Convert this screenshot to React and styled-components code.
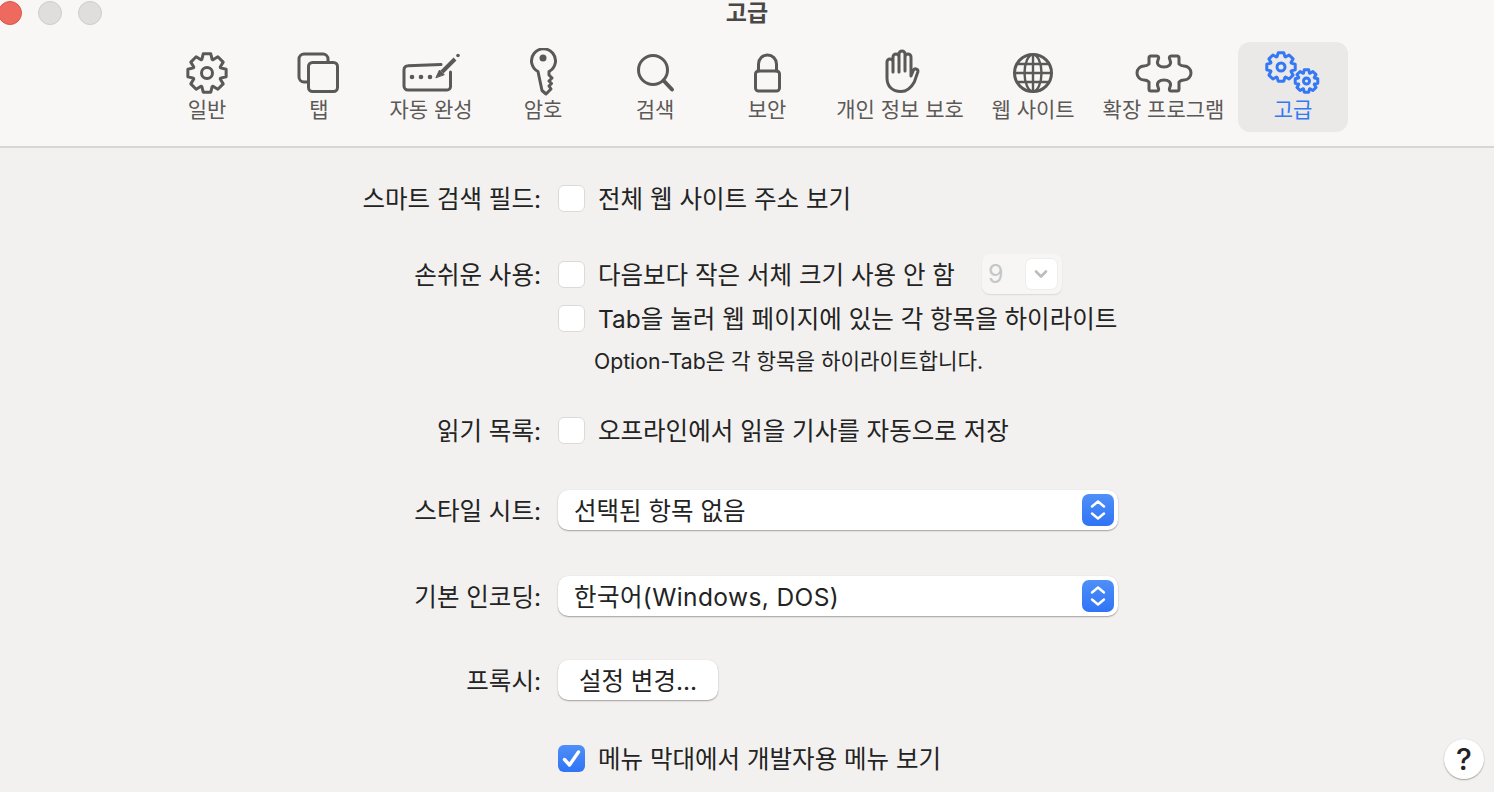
import React from "react";
import styled, { createGlobalStyle } from "styled-components";

const colors = {
    bar: "#f9f7f5",
    body: "#f2f1ef",
    icon: "#5b5957",
    blue: "#3478f6",
    text: "#232323",
};

const Global = createGlobalStyle`
    html, body {
        margin: 0;
        height: 100%;
        overflow: hidden;
        background: ${colors.body};
    }
    body {
        font-family: Inter, "Noto Sans CJK KR", sans-serif;
        color: ${colors.text};
    }
`;

const Window = styled.div`
    width: 1494px;
    height: 792px;
    position: relative;
    overflow: hidden;
`;

const Header = styled.header`
    height: 146px;
    background: ${colors.bar};
    border-bottom: 2px solid #d8d6d4;
    box-sizing: content-box;
    margin-bottom: -1px;
`;

const TitleBar = styled.div`
    display: grid;
    grid-template-columns: 1fr auto 1fr;
    height: 26px;
    align-items: center;
`;

const Lights = styled.div`
    display: flex;
    gap: 16px;
    margin-left: -2px;
`;

const Light = styled.span`
    width: 24px;
    height: 24px;
    border-radius: 50%;
    box-sizing: border-box;
    background: ${(p) => (p.$red ? "#ee6a5f" : "#dfdedc")};
    border: 1px solid ${(p) => (p.$red ? "#d9554b" : "#cfcdcb")};
`;

const Title = styled.h1`
    margin: 0;
    font-size: 23px;
    font-weight: 700;
    line-height: 24px;
    color: #4a4846;
`;

const Toolbar = styled.nav`
    display: flex;
    padding: 16px 0 0 151px;
`;

const Tool = styled.div`
    width: ${(p) => p.$width}px;
    height: 90px;
    border-radius: 12px;
    display: flex;
    flex-direction: column;
    align-items: center;
    background: ${(p) => (p.$active ? "#eae9e7" : "transparent")};
    color: ${(p) => (p.$active ? colors.blue : colors.icon)};
    svg {
        margin-top: 6px;
        display: block;
    }
`;

const ToolLabel = styled.span`
    font-size: 21px;
    line-height: 26px;
    margin-top: -3px;
    white-space: nowrap;
`;

const Form = styled.main`
    padding-top: 31px;
`;

const Row = styled.div`
    display: grid;
    grid-template-columns: 541px 1fr;
    column-gap: 17px;
    height: 40px;
    align-items: center;
    margin-top: ${(p) => p.$top || 0}px;
`;

const Label = styled.span`
    font-size: 24.5px;
    padding-bottom: 2px;
    text-align: right;
    white-space: nowrap;
`;

const Control = styled.div`
    grid-column: 2;
    display: flex;
    align-items: center;
`;

const Box = styled.span`
    width: 27px;
    height: 27px;
    box-sizing: border-box;
    border-radius: 6px;
    flex: none;
    display: flex;
    align-items: center;
    justify-content: center;
    background: ${(p) => (p.$checked ? "linear-gradient(#4f8ff8, #2f74f6)" : "#fff")};
    border: ${(p) => (p.$checked ? "none" : "1px solid #dcdad8")};
`;

const CheckText = styled.span`
    font-size: 24.5px;
    padding-bottom: 2px;
    margin-left: 13px;
    white-space: nowrap;
`;

const Hint = styled.span`
    font-size: 21.2px;
    padding-bottom: 2px;
    margin-left: 36px;
    white-space: nowrap;
`;

const FontSize = styled.div`
    width: 80px;
    height: 40px;
    box-sizing: border-box;
    margin-left: 27px;
    padding: 4px;
    border-radius: 8px;
    background: #f7f6f5;
    box-shadow: 0 1px 1.5px rgba(0, 0, 0, 0.1);
    display: flex;
    align-items: center;
    justify-content: space-between;
    color: #c6c6c6;
    font-size: 25px;
    padding-left: 6px;
`;

const FontArrow = styled.span`
    width: 33px;
    height: 32px;
    border-radius: 7px;
    background: #fff;
    border: 1px solid #eeedec;
    box-sizing: border-box;
    display: flex;
    align-items: center;
    justify-content: center;
`;

const raised = `
    background: #fff;
    border-radius: 10px;
    box-shadow: 0 1px 1.5px rgba(0, 0, 0, 0.32), 0 0 1px rgba(0, 0, 0, 0.12);
`;

const Select = styled.div`
    ${raised}
    width: 560px;
    height: 40px;
    box-sizing: border-box;
    padding: 0 4px 0 16px;
    display: flex;
    align-items: center;
    justify-content: space-between;
`;

const SelectText = styled.span`
    font-size: 24.5px;
    padding-bottom: 2px;
    letter-spacing: ${(p) => p.$track || 0}px;
`;

const Stepper = styled.span`
    width: 32px;
    height: 32px;
    border-radius: 7px;
    background: linear-gradient(#4f8ff8, #2f74f6);
    display: flex;
    align-items: center;
    justify-content: center;
`;

const Button = styled.div`
    ${raised}
    width: 160px;
    height: 40px;
    box-sizing: border-box;
    padding-bottom: 2px;
    display: flex;
    align-items: center;
    justify-content: center;
    font-size: 24.5px;
`;

const Help = styled.div`
    position: absolute;
    left: 1444px;
    top: 739px;
    width: 40px;
    height: 40px;
    ${raised}
    border-radius: 50%;
    display: flex;
    align-items: center;
    justify-content: center;
    font-size: 30px;
    font-weight: 500;
`;

// cog outline, computed so the big and small ones share a shape
const gearPath = (cx, cy, outer, inner, teeth = 8) => {
    const step = (Math.PI * 2) / teeth;
    const pts = [];
    for (let i = 0; i < teeth; i++) {
        const a = i * step - Math.PI / 2;
        [
            [inner, -0.5],
            [outer, -0.27],
            [outer, 0.27],
            [inner, 0.5],
        ].forEach(([r, k]) => {
            const t = a + k * step * 0.92;
            pts.push(`${(cx + r * Math.cos(t)).toFixed(2)} ${(cy + r * Math.sin(t)).toFixed(2)}`);
        });
    }
    return `M${pts.join("L")}Z`;
};

const Icon = ({ cx, children }) => (
    <svg
        width="70"
        height="52"
        viewBox={`${cx - 35} 48 70 52`}
        fill="none"
        stroke="currentColor"
        strokeWidth="3"
        strokeLinecap="round"
        strokeLinejoin="round"
    >
        {children}
    </svg>
);

const icons = {
    general: (
        <Icon cx={207}>
            <path d={gearPath(207, 73, 19.5, 14.5)} />
            <circle cx="207" cy="73" r="5.5" />
        </Icon>
    ),
    tabs: (
        <Icon cx={319}>
            <path d="M308 82h-4a5 5 0 0 1-5-5V59a5 5 0 0 1 5-5h19a5 5 0 0 1 5 5v3" />
            <rect x="308.5" y="62.5" width="29" height="29" rx="4" />
        </Icon>
    ),
    autofill: (
        <Icon cx={431}>
            <path d="M441 64.5l-33 1.2a4 4 0 0 0-4 4V86a4 4 0 0 0 4 4h39a3.5 3.5 0 0 0 3.500-3.500V72" />
            <path d="M442 72L455 59" strokeWidth="4" strokeLinecap="butt" />
            <path d="M436 77.500L439.500 70L444 74.500z" fill="currentColor" strokeWidth="1" />
            <circle cx="458" cy="55.500" r="1.800" fill="currentColor" stroke="none" />
            <circle cx="412" cy="77" r="2.300" fill="currentColor" stroke="none" />
            <circle cx="421" cy="77" r="2.300" fill="currentColor" stroke="none" />
            <circle cx="430" cy="77" r="2.300" fill="currentColor" stroke="none" />
        </Icon>
    ),
    password: (
        <Icon cx={543}>
            <path d="M538 71.500a12 12 0 1 1 11 0V75l3 3-3 3 2.500 2.500-2.500 2.500 2 3-5 5-4-3.500z" />
            <circle cx="543" cy="58" r="3.500" fill="currentColor" stroke="none" />
        </Icon>
    ),
    search: (
        <Icon cx={655}>
            <circle cx="653" cy="70" r="14.500" />
            <path d="M663.500 80.500L672 89.500" strokeWidth="4" />
        </Icon>
    ),
    security: (
        <Icon cx={767}>
            <rect x="755.500" y="71" width="24" height="20" rx="3" />
            <path d="M758.500 71V64a9 9 0 0 1 18 0v7" />
        </Icon>
    ),
    privacy: (
        <Icon cx={900}>
            <path d="M893 72V57a3 3 0 0 1 6 0V72M899 70V54a3 3 0 0 1 6 0V70M905 71V57a3 3 0 0 1 6 0V76l2.500-6a2.400 2.400 0 0 1 4.300 2l-3.500 10C911 88 906 91.500 901 91.500C892 91.500 887 86 887 78V62a3 3 0 0 1 6 0" />
        </Icon>
    ),
    websites: (
        <Icon cx={1033}>
            <circle cx="1033" cy="73" r="18.500" />
            <ellipse cx="1033" cy="73" rx="8.500" ry="18.500" strokeWidth="2.400" />
            <path d="M1033 54.500V91.500M1014.500 73H1051.500M1017 64H1049M1017 82H1049" strokeWidth="2.400" />
        </Icon>
    ),
    extensions: (
        <Icon cx={1163}>
            <path d="M1148 64V58a2 2 0 0 1 2-2h6c2 0 2 2 1 4c-2 5 2 7 6 7s8-2 6-7c-1-2-1-4 1-4h6a2 2 0 0 1 2 2v6c2 2 3 2 5 2a7 7 0 0 1 0 14c-2 0-3 0-5 2V89a2 2 0 0 1-2 2h-6c-2 0-2-2-1-4c2-5-2-7-6-7s-8 2-6 7c1 2 1 4-1 4h-6a2 2 0 0 1-2-2V82c-2-2-3-2-5-2a7 7 0 0 1 0-14c2 0 3 0 5-2z" />
        </Icon>
    ),
    advanced: (
        <Icon cx={1293}>
            <path d={gearPath(1281, 67, 14.500, 11)} />
            <circle cx="1281" cy="67" r="4" />
            <path d={gearPath(1306.500, 81, 11.500, 8.500)} />
            <circle cx="1306.500" cy="81" r="3" />
        </Icon>
    ),
};

const tools = [
    { key: "general", label: "일반", width: 112 },
    { key: "tabs", label: "탭", width: 112 },
    { key: "autofill", label: "자동 완성", width: 112 },
    { key: "password", label: "암호", width: 112 },
    { key: "search", label: "검색", width: 112 },
    { key: "security", label: "보안", width: 112 },
    { key: "privacy", label: "개인 정보 보호", width: 154 },
    { key: "websites", label: "웹 사이트", width: 112 },
    { key: "extensions", label: "확장 프로그램", width: 149 },
    { key: "advanced", label: "고급", width: 110, active: true },
];

const Stepped = () => (
    <Stepper>
        <svg width="18" height="24" viewBox="0 0 18 24" fill="none" stroke="#fff" strokeWidth="2.400" strokeLinecap="round" strokeLinejoin="round">
            <path d="M3 8.500L9 3.500L15 8.500M3 15.500L9 20.500L15 15.500" />
        </svg>
    </Stepper>
);

export default function App() {
    return (
        <Window>
            <Global />
            <Header>
                <TitleBar>
                    <Lights>
                        <Light $red />
                        <Light />
                        <Light />
                    </Lights>
                    <Title>고급</Title>
                </TitleBar>
                <Toolbar>
                    {tools.map((tool) => (
                        <Tool key={tool.key} $width={tool.width} $active={tool.active}>
                            {icons[tool.key]}
                            <ToolLabel>{tool.label}</ToolLabel>
                        </Tool>
                    ))}
                </Toolbar>
            </Header>
            <Form>
                <Row>
                    <Label>스마트 검색 필드:</Label>
                    <Control>
                        <Box />
                        <CheckText>전체 웹 사이트 주소 보기</CheckText>
                    </Control>
                </Row>
                <Row $top={36}>
                    <Label>손쉬운 사용:</Label>
                    <Control>
                        <Box />
                        <CheckText>다음보다 작은 서체 크기 사용 안 함</CheckText>
                        <FontSize>
                            9
                            <FontArrow>
                                <svg width="16" height="10" viewBox="0 0 16 10" fill="none" stroke="#bdbdbd" strokeWidth="2.600" strokeLinecap="round" strokeLinejoin="round">
                                    <path d="M3 2.500L8 7.500L13 2.500" />
                                </svg>
                            </FontArrow>
                        </FontSize>
                    </Control>
                </Row>
                <Row $top={4}>
                    <Control>
                        <Box />
                        <CheckText>Tab을 눌러 웹 페이지에 있는 각 항목을 하이라이트</CheckText>
                    </Control>
                </Row>
                <Row $top={2}>
                    <Control>
                        <Hint>Option-Tab은 각 항목을 하이라이트합니다.</Hint>
                    </Control>
                </Row>
                <Row $top={30}>
                    <Label>읽기 목록:</Label>
                    <Control>
                        <Box />
                        <CheckText>오프라인에서 읽을 기사를 자동으로 저장</CheckText>
                    </Control>
                </Row>
                <Row $top={40}>
                    <Label>스타일 시트:</Label>
                    <Control>
                        <Select>
                            <SelectText>선택된 항목 없음</SelectText>
                            <Stepped />
                        </Select>
                    </Control>
                </Row>
                <Row $top={46}>
                    <Label>기본 인코딩:</Label>
                    <Control>
                        <Select>
                            <SelectText $track={0.4}>한국어(Windows, DOS)</SelectText>
                            <Stepped />
                        </Select>
                    </Control>
                </Row>
                <Row $top={44}>
                    <Label>프록시:</Label>
                    <Control>
                        <Button>설정 변경...</Button>
                    </Control>
                </Row>
                <Row $top={38}>
                    <Control>
                        <Box $checked>
                            <svg width="21" height="21" viewBox="0 0 21 21" fill="none" stroke="#fff" strokeWidth="3.400" strokeLinecap="round" strokeLinejoin="round">
                                <path d="M3.500 11.500L8.500 17L17.500 4" />
                            </svg>
                        </Box>
                        <CheckText>메뉴 막대에서 개발자용 메뉴 보기</CheckText>
                    </Control>
                </Row>
            </Form>
            <Help>?</Help>
        </Window>
    );
}
